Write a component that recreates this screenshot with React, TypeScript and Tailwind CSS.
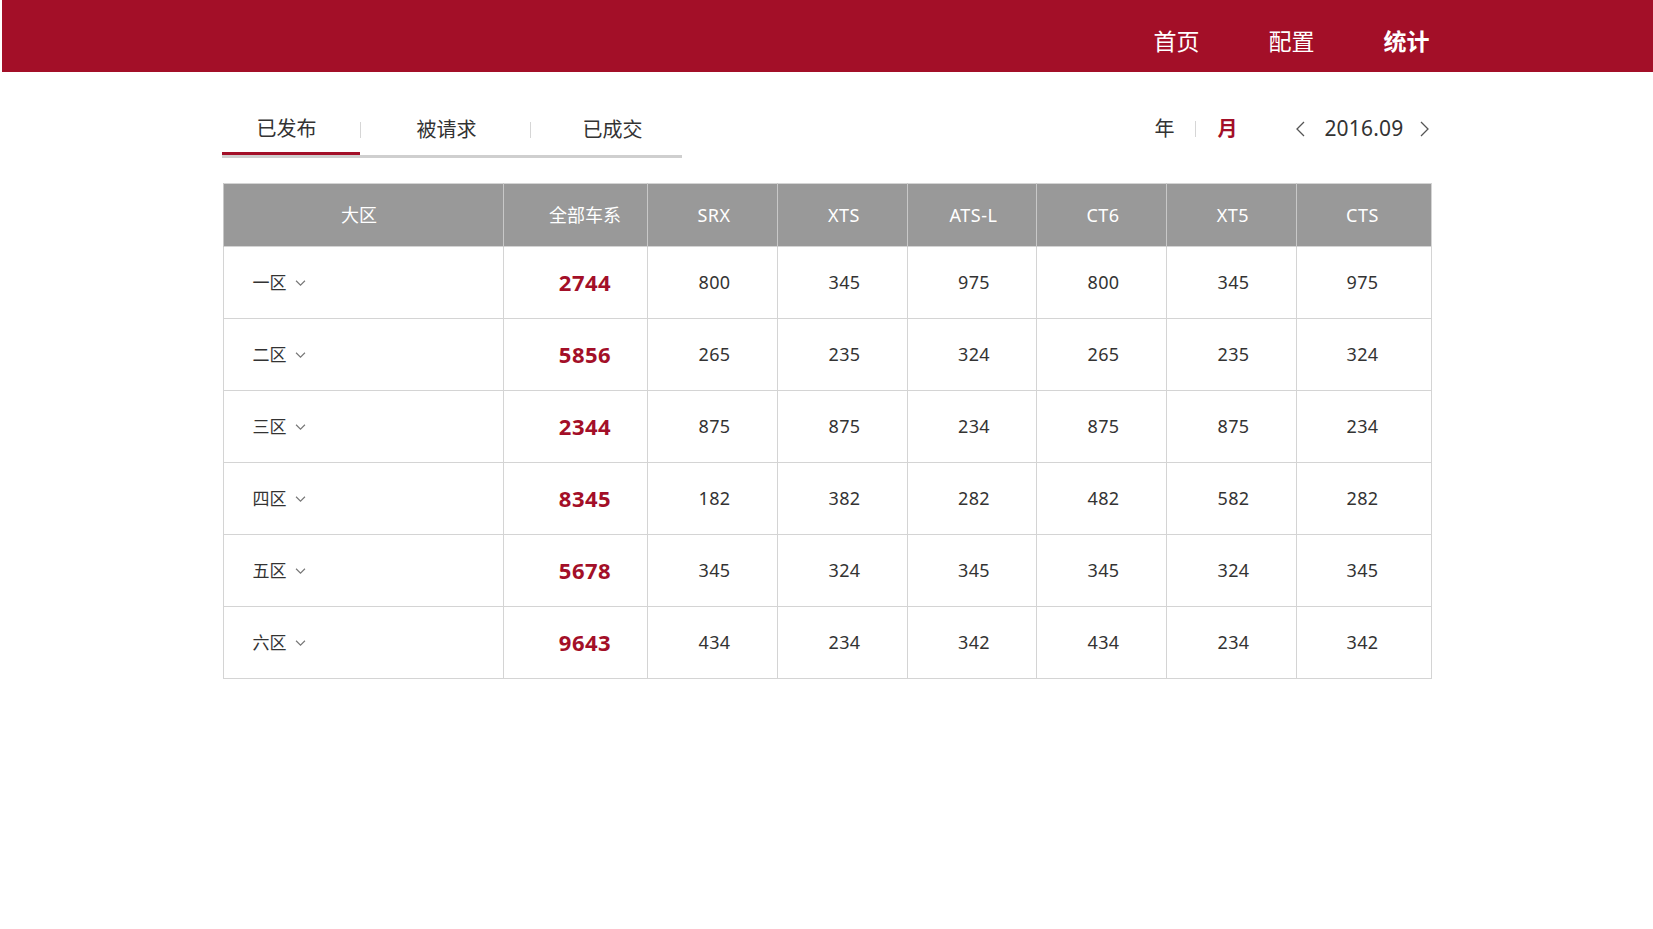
import React from "react";

const font = { fontFamily: '"Noto Sans", "Noto Sans CJK SC", sans-serif' };

const cols = ["SRX", "XTS", "ATS-L", "CT6", "XT5", "CTS"];
const rows: { name: string; total: string; vals: string[] }[] = [
  { name: "一区", total: "2744", vals: ["800", "345", "975", "800", "345", "975"] },
  { name: "二区", total: "5856", vals: ["265", "235", "324", "265", "235", "324"] },
  { name: "三区", total: "2344", vals: ["875", "875", "234", "875", "875", "234"] },
  { name: "四区", total: "8345", vals: ["182", "382", "282", "482", "582", "282"] },
  { name: "五区", total: "5678", vals: ["345", "324", "345", "345", "324", "345"] },
  { name: "六区", total: "9643", vals: ["434", "234", "342", "434", "234", "342"] },
];

function Chevron({ dir, className }: { dir: "left" | "right" | "down"; className?: string }) {
  const d =
    dir === "left" ? "M9 1 L2 8 L9 15" : dir === "right" ? "M2 1 L9 8 L2 15" : "M1 2 L6 7 L11 2";
  const vb = dir === "down" ? "0 0 12 9" : "0 0 11 16";
  return (
    <svg viewBox={vb} className={className} fill="none" stroke="currentColor" strokeWidth={1.3}>
      <path d={d} />
    </svg>
  );
}

export default function App() {
  return (
    <div className="min-h-screen bg-white" style={font}>
      <header className="h-[72px] ml-[2px] bg-[#a30f28]">
        <div className="mx-auto w-[1210px] h-full flex items-center justify-end pt-[10px] pr-[3px] gap-[69px] text-[23px] text-white">
          <span>首页</span>
          <span>配置</span>
          <span className="font-bold">统计</span>
        </div>
      </header>

      <div className="mx-auto w-[1210px] pt-[39px]">
        <div className="flex items-start justify-between">
          <div className="flex w-[460px] border-b-[3px] border-[#cfcfcf]">
            <div className="relative w-[138px] h-[44px] flex items-center pb-[6px] pl-[35px] text-[20px] text-[#333] mb-[-3px] border-b-[3px] border-[#a30f28]">
              已发布
            </div>
            <div className="relative w-[170px] h-[44px] flex items-center pb-[6px] pl-[57px] text-[20px] text-[#333]">
              <span className="absolute left-0 top-[11px] h-[16px] w-px bg-[#d6d6d6]" />
              被请求
            </div>
            <div className="relative w-[152px] h-[44px] flex items-center pb-[6px] pl-[53px] text-[20px] text-[#333]">
              <span className="absolute left-0 top-[11px] h-[16px] w-px bg-[#d6d6d6]" />
              已成交
            </div>
          </div>

          <div className="flex items-center h-[36px] pr-[2px] text-[20px] text-[#333]">
            <span>年</span>
            <span className="mx-[21px] h-[16px] w-px bg-[#d6d6d6]" />
            <span className="font-bold text-[#a30f28]">月</span>
            <Chevron dir="left" className="ml-[58px] w-[11px] h-[16px] text-[#555]" />
            <span className="ml-[18px] text-[21px] tracking-[0.2px]">2016.09</span>
            <Chevron dir="right" className="ml-[15px] w-[11px] h-[16px] text-[#555]" />
          </div>
        </div>

        <table className="mt-[25px] ml-[1px] w-[1208px] border-collapse border border-[#d4d4d4] table-fixed">
          <colgroup>
            <col className="w-[280px]" />
            <col className="w-[144px]" />
            <col className="w-[130px]" />
            <col className="w-[130px]" />
            <col className="w-[129px]" />
            <col className="w-[130px]" />
            <col className="w-[130px]" />
            <col className="w-[135px]" />
          </colgroup>
          <thead>
            <tr className="h-[63px] bg-[#999999] text-white text-[18px]">
              <th className="font-normal border-l border-[#c8c8c8] pr-[8px]">大区</th>
              <th className="font-normal border-l border-[#c8c8c8] pl-[20px]">全部车系</th>
              {cols.map((c, i) => (
                <th
                  key={c}
                  className={
                    "font-normal border-l border-[#c8c8c8] tracking-[0.5px] " +
                    (i === 5 ? "pr-[2px]" : "pl-[4px]")
                  }
                >
                  {c}
                </th>
              ))}
            </tr>
          </thead>
          <tbody>
            {rows.map((r) => (
              <tr key={r.name} className="h-[72px] border-t border-[#d4d4d4]">
                <td className="border-l border-[#d4d4d4] pl-[29px]">
                  <div className="flex items-center text-[17px] text-[#333]">
                    <span>{r.name}</span>
                    <Chevron dir="down" className="ml-[8px] w-[11px] h-[8px] text-[#777]" />
                  </div>
                </td>
                <td className="border-l border-[#d4d4d4] pl-[20px] text-center text-[22px] font-bold text-[#a30f28] tracking-[0.5px]">
                  {r.total}
                </td>
                {r.vals.map((v, i) => (
                  <td
                    key={i}
                    className={
                      "border-l border-[#d4d4d4] text-center text-[18px] text-[#333] tracking-[0.4px] " +
                      (i === 5 ? "pr-[2px]" : "pl-[5px]")
                    }
                  >
                    {v}
                  </td>
                ))}
              </tr>
            ))}
          </tbody>
        </table>
      </div>
    </div>
  );
}
